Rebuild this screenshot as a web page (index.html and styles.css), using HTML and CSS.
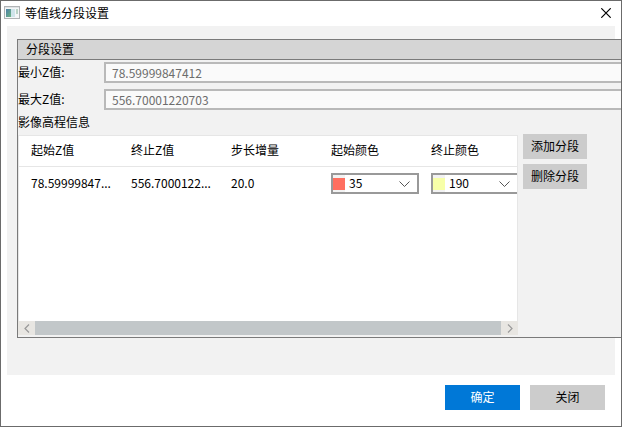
FILE: index.html
```
<!DOCTYPE html>
<html lang="zh-CN">
<head>
    <meta charset="UTF-8">
    <meta name="viewport" content="width=device-width, initial-scale=1.0">
    <title>等值线分段设置</title>
    <link rel="stylesheet" href="styles.css">
</head>
<body>
    <div class="dialog">
        <header class="title-bar">
            <svg class="app-icon" width="16" height="14" viewBox="0 0 16 14">
                <linearGradient id="appFill" x1="0" y1="0" x2="1" y2="1">
                    <stop offset="0" stop-color="#4a7fa8"/>
                    <stop offset="1" stop-color="#6fb583"/>
                </linearGradient>
                <rect x="0.5" y="0.5" width="15" height="12" fill="#f4f6f7" stroke="#b0b3b5"/>
                <rect x="1" y="1" width="14" height="1" fill="#dfe3e5"/>
                <rect x="2" y="3" width="5" height="8" fill="url(#appFill)"/>
                <rect x="7" y="3" width="4" height="8" fill="#cfe4ea"/>
                <rect x="12" y="3" width="2" height="5" fill="#b9d3c6"/>
            </svg>
            <h1>等值线分段设置</h1>
            <button type="button" class="close-button" aria-label="关闭窗口">
                <svg width="10" height="10" viewBox="0 0 10 10">
                    <path d="M0.3 0.3L9.7 9.7M9.7 0.3L0.3 9.7" stroke="#000" stroke-width="1.2"/>
                </svg>
            </button>
        </header>

        <main class="content">
            <section class="group-box">
                <h2>分段设置</h2>
                <div class="form-row">
                    <label for="minZ">最小Z值:</label>
                    <input type="text" id="minZ" value="78.59999847412" disabled>
                </div>
                <div class="form-row">
                    <label for="maxZ">最大Z值:</label>
                    <input type="text" id="maxZ" value="556.70001220703" disabled>
                </div>
                <p class="caption">影像高程信息</p>

                <div class="segments">
                    <div class="table-box">
                        <div class="table-view">
                            <table>
                                <thead>
                                    <tr>
                                        <th>起始Z值</th>
                                        <th>终止Z值</th>
                                        <th>步长增量</th>
                                        <th>起始颜色</th>
                                        <th>终止颜色</th>
                                    </tr>
                                </thead>
                                <tbody>
                                    <tr>
                                        <td>78.59999847...</td>
                                        <td>556.7000122...</td>
                                        <td>20.0</td>
                                        <td>
                                            <div class="color-select">
                                                <span class="swatch start"></span>
                                                <select aria-label="起始颜色">
                                                    <option>35</option>
                                                </select>
                                                <svg class="arrow" width="11" height="6" viewBox="0 0 11 6">
                                                    <path d="M0.5 0.5L5.5 5.5L10.5 0.5" fill="none" stroke="#555"/>
                                                </svg>
                                            </div>
                                        </td>
                                        <td>
                                            <div class="color-select">
                                                <span class="swatch end"></span>
                                                <select aria-label="终止颜色">
                                                    <option>190</option>
                                                </select>
                                                <svg class="arrow" width="11" height="6" viewBox="0 0 11 6">
                                                    <path d="M0.5 0.5L5.5 5.5L10.5 0.5" fill="none" stroke="#555"/>
                                                </svg>
                                            </div>
                                        </td>
                                    </tr>
                                </tbody>
                            </table>
                        </div>
                        <div class="scrollbar">
                            <button type="button" aria-label="向左滚动">
                                <svg width="6" height="9" viewBox="0 0 6 9">
                                    <path d="M5 0.5L1 4.5L5 8.5" fill="none" stroke="#999" stroke-width="1.2"/>
                                </svg>
                            </button>
                            <div class="thumb"></div>
                            <button type="button" aria-label="向右滚动">
                                <svg width="6" height="9" viewBox="0 0 6 9">
                                    <path d="M1 0.5L5 4.5L1 8.5" fill="none" stroke="#999" stroke-width="1.2"/>
                                </svg>
                            </button>
                        </div>
                    </div>
                    <div class="side-buttons">
                        <button type="button" class="btn">添加分段</button>
                        <button type="button" class="btn">删除分段</button>
                    </div>
                </div>
            </section>
        </main>

        <footer class="actions">
            <button type="button" class="btn primary">确定</button>
            <button type="button" class="btn">关闭</button>
        </footer>
    </div>
</body>
</html>
```

FILE: styles.css
```
* {
    box-sizing: border-box;
}
body {
    margin: 0;
    font-family: "Noto Sans CJK SC", sans-serif;
    font-size: 12px;
    line-height: 18px;
    color: #000;
}
button,
input,
select {
    font: inherit;
    color: inherit;
}
button {
    padding: 0;
    border: none;
}
.dialog {
    display: flex;
    flex-direction: column;
    min-height: 100vh;
    border: 1px solid #6b6b6b;
    background-color: #fff;
    overflow: hidden;
}

/* title bar */
.title-bar {
    display: flex;
    align-items: center;
    height: 25px;
    padding: 0 10px 1px 3px;
}
.title-bar h1 {
    flex: 1;
    margin: 0 0 0 5px;
    padding-bottom: 1px;
    font-size: 12px;
    font-weight: normal;
}
.close-button {
    display: flex;
    background: none;
}

/* group box */
.content {
    flex: 1;
    margin: 0 6px;
    padding: 13px 0 37px 10px;
    background-color: #f2f2f2;
    display: flex;
}
.group-box {
    flex: 1;
    display: flex;
    flex-direction: column;
    min-width: 0;
    margin-right: -6px;
    border: 1px solid #7a7a7a;
    border-right: none;
    background-color: #f2f2f2;
}
.group-box h2 {
    margin: 0 0 2px;
    padding: 0 8px;
    height: 20px;
    border-bottom: 1px solid #7a7a7a;
    background-color: #d5d5d5;
    font-size: 12px;
    font-weight: normal;
}
.form-row {
    display: flex;
    align-items: center;
    margin-bottom: 6px;
}
.form-row label {
    width: 86px;
    padding-bottom: 1px;
}
.form-row input {
    flex: 1;
    min-width: 0;
    height: 21px;
    padding: 0 6px 1px;
    border: 2px solid #b9b9b9;
    border-right: none;
    background-color: #fafafa;
    color: #6d6d6d;
}
.caption {
    margin: -3px 0 3px;
}

/* segment table */
.segments {
    flex: 1;
    display: flex;
    gap: 5px;
    padding-bottom: 2px;
}
.table-box {
    flex: 1;
    min-width: 0;
    display: flex;
    flex-direction: column;
    margin-top: 1px;
}
.table-view {
    flex: 1;
    border: 1px solid #e6e6e6;
    border-bottom: none;
    background-color: #fff;
    overflow: hidden;
}
table {
    width: 500px;
    table-layout: fixed;
    border-collapse: collapse;
}
th,
td {
    padding: 0 0 0 12px;
    text-align: left;
    font-weight: normal;
    white-space: nowrap;
}
th {
    height: 30px;
    padding-bottom: 1px;
    border-bottom: 1px solid #e6e6e6;
}
td {
    height: 34px;
}
.color-select {
    position: relative;
    width: 88px;
}
.color-select select {
    display: block;
    width: 100%;
    height: 21px;
    padding: 0 20px 2px 16px;
    border: 2px solid #999;
    border-radius: 0;
    background-color: #fff;
    appearance: none;
    line-height: 15px;
}
.swatch {
    position: absolute;
    top: 2px;
    left: 2px;
    width: 12px;
    height: 17px;
    border: solid #f2f2f2;
    border-width: 3px 0 2px;
}
.swatch.start {
    background-color: #ff6f60;
}
.swatch.end {
    background-color: #f7ffa8;
}
.arrow {
    position: absolute;
    top: 8px;
    right: 9px;
    pointer-events: none;
}
.scrollbar {
    display: flex;
    height: 14px;
    background-color: #e8e6e2;
}
.scrollbar button {
    display: flex;
    align-items: center;
    justify-content: center;
    width: 17px;
    background: none;
}
.thumb {
    flex: 1;
    background-color: #c2c7c9;
}
.side-buttons {
    display: flex;
    flex-direction: column;
    gap: 5px;
    margin-right: 34px;
}

/* buttons */
.btn {
    height: 25px;
    padding-bottom: 1px;
    background-color: #ccc;
}
.side-buttons .btn {
    width: 64px;
}
.actions {
    display: flex;
    justify-content: flex-end;
    gap: 10px;
    padding: 10px 16px 16px;
}
.actions .btn {
    width: 75px;
}
.btn.primary {
    background-color: #0078d7;
    color: #fff;
}
```
